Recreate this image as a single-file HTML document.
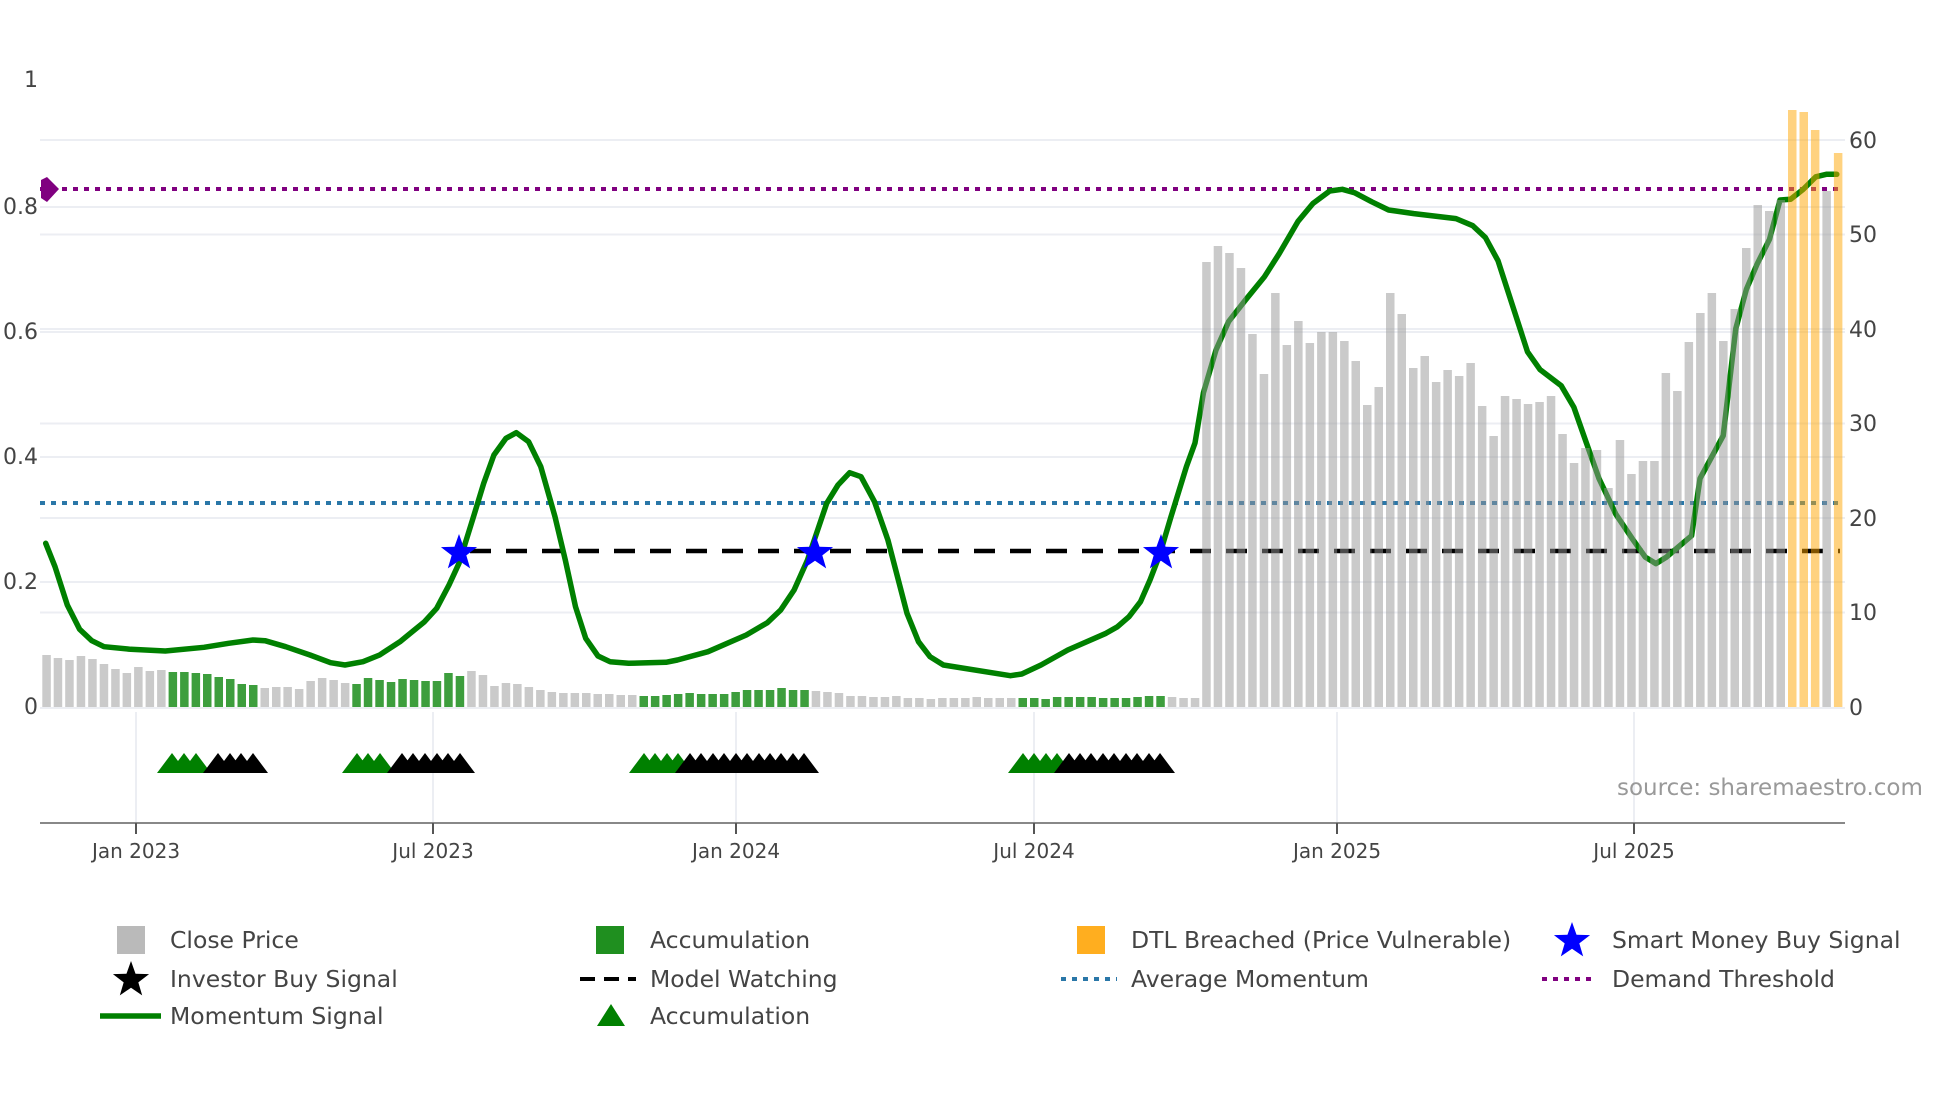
<!DOCTYPE html>
<html><head><meta charset="utf-8"><style>
html,body{margin:0;padding:0;background:#fff;}
svg{display:block;font-family:"DejaVu Sans","Liberation Sans",sans-serif;}
</style></head><body>
<svg width="1960" height="1102" viewBox="0 0 1960 1102" xmlns="http://www.w3.org/2000/svg">
<rect width="1960" height="1102" fill="#fff"/>
<g stroke="#eceef3" stroke-width="2">
<line x1="40" x2="1845" y1="582" y2="582"/><line x1="40" x2="1845" y1="457" y2="457"/>
<line x1="40" x2="1845" y1="332" y2="332"/><line x1="40" x2="1845" y1="207" y2="207"/>
<line x1="40" x2="1845" y1="612.5" y2="612.5"/><line x1="40" x2="1845" y1="518" y2="518"/>
<line x1="40" x2="1845" y1="423.5" y2="423.5"/><line x1="40" x2="1845" y1="329" y2="329"/>
<line x1="40" x2="1845" y1="234.5" y2="234.5"/><line x1="40" x2="1845" y1="140" y2="140"/>
<line x1="40" x2="1845" y1="708" y2="708"/>
<line x1="136" x2="136" y1="712" y2="823"/><line x1="433" x2="433" y1="712" y2="823"/>
<line x1="736" x2="736" y1="712" y2="823"/><line x1="1034" x2="1034" y1="712" y2="823"/>
<line x1="1337" x2="1337" y1="712" y2="823"/><line x1="1634" x2="1634" y1="712" y2="823"/>
</g>
<line x1="40" x2="1845" y1="823" y2="823" stroke="#888" stroke-width="2"/>
<g stroke="#555" stroke-width="2">
<line x1="136" x2="136" y1="823" y2="834"/><line x1="433" x2="433" y1="823" y2="834"/>
<line x1="736" x2="736" y1="823" y2="834"/><line x1="1034" x2="1034" y1="823" y2="834"/>
<line x1="1337" x2="1337" y1="823" y2="834"/><line x1="1634" x2="1634" y1="823" y2="834"/>
</g>
<g fill="#444" font-size="20" text-anchor="middle">
<text x="136" y="858">Jan 2023</text><text x="433" y="858">Jul 2023</text>
<text x="736" y="858">Jan 2024</text><text x="1034" y="858">Jul 2024</text>
<text x="1337" y="858">Jan 2025</text><text x="1634" y="858">Jul 2025</text>
</g>
<g fill="#444" font-size="22" text-anchor="end">
<text x="38" y="87">1</text><text x="38" y="214">0.8</text><text x="38" y="339">0.6</text>
<text x="38" y="464">0.4</text><text x="38" y="589">0.2</text><text x="38" y="714">0</text>
</g>
<g fill="#444" font-size="22" text-anchor="start">
<text x="1849" y="715">0</text><text x="1849" y="620">10</text><text x="1849" y="526">20</text>
<text x="1849" y="431">30</text><text x="1849" y="337">40</text><text x="1849" y="242">50</text>
<text x="1849" y="148">60</text>
</g>
<line x1="40" x2="1840" y1="189" y2="189" stroke="#800080" stroke-width="4" stroke-dasharray="5,6"/>
<line x1="40" x2="1840" y1="503" y2="503" stroke="#2a77a8" stroke-width="4" stroke-dasharray="5,6"/>
<line x1="470" x2="1840" y1="551" y2="551" stroke="#000" stroke-width="4.5" stroke-dasharray="21,15"/>
<polygon points="41,180 47,177 59,189 47,202 41,198" fill="#800080"/>
<polyline fill="none" stroke="#008000" stroke-width="5.5" stroke-linejoin="round" stroke-linecap="round" points="45.7,543.3 55,566.7 67.3,605 79.6,629.3 91.8,640.7 104,646.7 130.6,649.3 165.3,651 204,647.3 228.6,643.3 253,640 265,640.7 285.7,646.7 310,655 330.6,662.7 345,665 363,661.7 379.6,655 400,641.7 424.5,621.7 436.7,608.3 449,585 459,563.3 473.5,516.7 483.7,483.3 493.9,455 506,438.3 516.3,432.7 528.6,441.7 540.8,466.7 555,516.7 565.3,560 575.5,606.7 585.7,638.3 598,656 610,661.7 628.6,663.3 666,662.3 677.4,660 708,651.7 746.3,635 767.3,622.7 780.7,610 794.1,590 807.5,560 826.7,503.3 838,485 849.6,472.7 861,476.7 874.5,501.7 887.9,540 907,613.3 918.5,641.7 930,656.7 943.4,665 1010.4,675.7 1021.8,674 1041,665 1067.8,650 1106,633.3 1117.5,626.7 1129,616.7 1140.5,601.7 1150,580 1159.6,555 1171,516.7 1186.4,466.7 1195,442.9 1203.4,392.9 1216,350 1228.7,321.4 1245.5,300 1264.4,276.8 1279.2,253.6 1298,221.4 1312.8,203.6 1329.7,191 1342.3,189.3 1355,192.9 1371.8,201.8 1388.6,210 1413.9,213.6 1456,218.6 1472.8,225.7 1485.4,237.5 1498,260.7 1527.5,351.8 1540,369.6 1561.2,385.7 1573.8,407.1 1586.4,442.9 1599,478.6 1615.9,514.3 1632.7,539.3 1645.3,557.1 1655.9,563.6 1666.4,557.1 1679,546.4 1691.6,535.7 1700,478.6 1723.2,435.7 1729.5,382.1 1735.8,328.6 1746.4,289.3 1757,264.3 1769.5,239.3 1780,200 1790.5,199.3 1803.2,189.3 1815.8,176.8 1826.3,174.3 1836.8,174.3"/>
<path fill="rgba(150,150,150,0.5)" d="M42.3,655h8.5V707h-8.5zM53.7,658h8.5V707h-8.5zM65.2,660h8.5V707h-8.5zM76.7,656h8.5V707h-8.5zM88.2,659h8.5V707h-8.5zM99.7,664h8.5V707h-8.5zM111.2,669h8.5V707h-8.5zM122.6,673h8.5V707h-8.5zM134.1,667h8.5V707h-8.5zM145.6,671h8.5V707h-8.5zM157.1,670h8.5V707h-8.5z
M260.5,688h8.5V707h-8.5zM272,687h8.5V707h-8.5zM283.4,687h8.5V707h-8.5zM294.9,689h8.5V707h-8.5zM306.4,681h8.5V707h-8.5zM317.9,678h8.5V707h-8.5zM329.4,680h8.5V707h-8.5zM340.9,683h8.5V707h-8.5z
M467.2,671h8.5V707h-8.5zM478.7,675h8.5V707h-8.5zM490.2,686h8.5V707h-8.5zM501.7,683h8.5V707h-8.5zM513.1,684h8.5V707h-8.5zM524.6,687h8.5V707h-8.5zM536.1,690h8.5V707h-8.5zM547.6,692h8.5V707h-8.5zM559.1,693h8.5V707h-8.5zM570.6,693h8.5V707h-8.5zM582,693h8.5V707h-8.5zM593.5,694h8.5V707h-8.5zM605,694h8.5V707h-8.5zM616.5,695h8.5V707h-8.5zM628,695h8.5V707h-8.5z
M811.7,691h8.5V707h-8.5zM823.2,692h8.5V707h-8.5zM834.7,693h8.5V707h-8.5zM846.2,696h8.5V707h-8.5zM857.7,696h8.5V707h-8.5zM869.2,697h8.5V707h-8.5zM880.7,697h8.5V707h-8.5zM892.1,696h8.5V707h-8.5zM903.6,698h8.5V707h-8.5zM915.1,698h8.5V707h-8.5zM926.6,699h8.5V707h-8.5zM938.1,698h8.5V707h-8.5zM949.6,698h8.5V707h-8.5zM961.1,698h8.5V707h-8.5zM972.5,697h8.5V707h-8.5zM984,698h8.5V707h-8.5zM995.5,698h8.5V707h-8.5zM1007,698h8.5V707h-8.5z
M1167.8,697h8.5V707h-8.5zM1179.3,698h8.5V707h-8.5zM1190.8,698h8.5V707h-8.5z
M1202.2,262h8.5V707h-8.5zM1213.7,246h8.5V707h-8.5zM1225.2,253h8.5V707h-8.5zM1236.7,268h8.5V707h-8.5zM1248.2,334h8.5V707h-8.5zM1259.7,374h8.5V707h-8.5zM1271.1,293h8.5V707h-8.5zM1282.6,345h8.5V707h-8.5zM1294.1,321h8.5V707h-8.5zM1305.6,343h8.5V707h-8.5z
M1317.1,332h8.5V707h-8.5zM1328.6,332h8.5V707h-8.5zM1340.1,341h8.5V707h-8.5zM1351.5,361h8.5V707h-8.5zM1363,405h8.5V707h-8.5zM1374.5,387h8.5V707h-8.5zM1386,293h8.5V707h-8.5zM1397.5,314h8.5V707h-8.5zM1409,368h8.5V707h-8.5zM1420.5,356h8.5V707h-8.5z
M1431.9,382h8.5V707h-8.5zM1443.4,370h8.5V707h-8.5zM1454.9,376h8.5V707h-8.5zM1466.4,363h8.5V707h-8.5zM1477.9,406h8.5V707h-8.5zM1489.4,436h8.5V707h-8.5zM1500.8,396h8.5V707h-8.5zM1512.3,399h8.5V707h-8.5zM1523.8,404h8.5V707h-8.5zM1535.3,402h8.5V707h-8.5z
M1546.8,396h8.5V707h-8.5zM1558.3,434h8.5V707h-8.5zM1569.8,463h8.5V707h-8.5zM1581.2,448h8.5V707h-8.5zM1592.7,450h8.5V707h-8.5zM1604.2,488h8.5V707h-8.5zM1615.7,440h8.5V707h-8.5zM1627.2,474h8.5V707h-8.5zM1638.7,461h8.5V707h-8.5zM1650.2,461h8.5V707h-8.5z
M1661.6,373h8.5V707h-8.5zM1673.1,391h8.5V707h-8.5zM1684.6,342h8.5V707h-8.5zM1696.1,313h8.5V707h-8.5zM1707.6,293h8.5V707h-8.5zM1719.1,341h8.5V707h-8.5zM1730.5,309h8.5V707h-8.5zM1742,248h8.5V707h-8.5zM1753.5,205h8.5V707h-8.5zM1765,211h8.5V707h-8.5zM1776.5,200h8.5V707h-8.5z
M1822.4,191h8.5V707h-8.5z"/>
<path fill="rgba(0,128,0,0.76)" d="M168.6,672h8.5V707h-8.5zM180.1,672h8.5V707h-8.5zM191.6,673h8.5V707h-8.5zM203,674h8.5V707h-8.5zM214.5,677h8.5V707h-8.5zM226,679h8.5V707h-8.5zM237.5,684h8.5V707h-8.5zM249,685h8.5V707h-8.5z
M352.3,684h8.5V707h-8.5zM363.8,678h8.5V707h-8.5zM375.3,680h8.5V707h-8.5zM386.8,682h8.5V707h-8.5zM398.3,679h8.5V707h-8.5zM409.8,680h8.5V707h-8.5zM421.3,681h8.5V707h-8.5zM432.7,681h8.5V707h-8.5zM444.2,673h8.5V707h-8.5zM455.7,676h8.5V707h-8.5z
M639.5,696h8.5V707h-8.5zM650.9,696h8.5V707h-8.5zM662.4,695h8.5V707h-8.5zM673.9,694h8.5V707h-8.5zM685.4,693h8.5V707h-8.5zM696.9,694h8.5V707h-8.5zM708.4,694h8.5V707h-8.5zM719.9,694h8.5V707h-8.5zM731.4,692h8.5V707h-8.5zM742.8,690h8.5V707h-8.5zM754.3,690h8.5V707h-8.5zM765.8,690h8.5V707h-8.5zM777.3,688h8.5V707h-8.5zM788.8,690h8.5V707h-8.5zM800.3,690h8.5V707h-8.5z
M1018.5,698h8.5V707h-8.5zM1030,698h8.5V707h-8.5zM1041.4,699h8.5V707h-8.5zM1052.9,697h8.5V707h-8.5zM1064.4,697h8.5V707h-8.5zM1075.9,697h8.5V707h-8.5zM1087.4,697h8.5V707h-8.5zM1098.9,698h8.5V707h-8.5zM1110.4,698h8.5V707h-8.5zM1121.8,698h8.5V707h-8.5zM1133.3,697h8.5V707h-8.5zM1144.8,696h8.5V707h-8.5zM1156.3,696h8.5V707h-8.5z"/>
<path fill="rgba(255,165,0,0.5)" d="M1788,110h8.5V707h-8.5zM1799.5,112h8.5V707h-8.5zM1810.9,130h8.5V707h-8.5zM1833.9,153h8.5V707h-8.5z"/>
<defs><polygon id="st" points="0,-19 4.53,-6.23 18.07,-5.87 7.32,2.38 11.17,15.37 0,7.7 -11.17,15.37 -7.32,2.38 -18.07,-5.87 -4.53,-6.23"/></defs>
<use href="#st" transform="translate(459,553)" fill="#0000ff"/>
<use href="#st" transform="translate(815,553)" fill="#0000ff"/>
<use href="#st" transform="translate(1161,553)" fill="#0000ff"/>
<g fill="#008000">
<polygon points="157,773 172,753 187,773"/><polygon points="169,773 184,753 199,773"/><polygon points="181,773 196,753 211,773"/>
<polygon points="342,773 357,753 372,773"/><polygon points="353,773 368,753 383,773"/><polygon points="365,773 380,753 395,773"/>
<polygon points="629,773 644,753 659,773"/><polygon points="640,773 655,753 670,773"/><polygon points="652,773 667,753 682,773"/><polygon points="663,773 678,753 693,773"/>
<polygon points="1008,773 1023,753 1038,773"/><polygon points="1019,773 1034,753 1049,773"/><polygon points="1031,773 1046,753 1061,773"/><polygon points="1042,773 1057,753 1072,773"/>
</g>
<g fill="#000">
<polygon points="203,773 218,753 233,773"/><polygon points="215,773 230,753 245,773"/><polygon points="226,773 241,753 256,773"/><polygon points="238,773 253,753 268,773"/>
<polygon points="387,773 402,753 417,773"/><polygon points="398,773 413,753 428,773"/><polygon points="410,773 425,753 440,773"/><polygon points="422,773 437,753 452,773"/><polygon points="433,773 448,753 463,773"/><polygon points="445,773 460,753 475,773"/>
<polygon points="675,773 690,753 705,773"/><polygon points="686,773 701,753 716,773"/><polygon points="698,773 713,753 728,773"/><polygon points="709,773 724,753 739,773"/><polygon points="721,773 736,753 751,773"/><polygon points="732,773 747,753 762,773"/><polygon points="744,773 759,753 774,773"/><polygon points="755,773 770,753 785,773"/><polygon points="766,773 781,753 796,773"/><polygon points="778,773 793,753 808,773"/><polygon points="789,773 804,753 819,773"/>
<polygon points="1054,773 1069,753 1084,773"/><polygon points="1065,773 1080,753 1095,773"/><polygon points="1076,773 1091,753 1106,773"/><polygon points="1088,773 1103,753 1118,773"/><polygon points="1099,773 1114,753 1129,773"/><polygon points="1111,773 1126,753 1141,773"/><polygon points="1122,773 1137,753 1152,773"/><polygon points="1134,773 1149,753 1164,773"/><polygon points="1145,773 1160,753 1175,773"/>
</g>
<text x="1617" y="795" font-size="23" fill="#999">source: sharemaestro.com</text>
<rect x="117" y="926" width="28" height="28" fill="#bababa"/>
<rect x="596" y="926" width="28" height="28" fill="#1f8f1f"/>
<rect x="1077" y="926" width="28" height="28" fill="#ffae1f"/>
<use href="#st" transform="translate(1572,941)" fill="#0000ff"/>
<use href="#st" transform="translate(131,980)" fill="#000"/>
<line x1="580" x2="636" y1="979" y2="979" stroke="#000" stroke-width="4" stroke-dasharray="15,9"/>
<line x1="1061" x2="1117" y1="979" y2="979" stroke="#2a77a8" stroke-width="4" stroke-dasharray="5,6"/>
<line x1="1542" x2="1597" y1="979" y2="979" stroke="#800080" stroke-width="4" stroke-dasharray="5,6"/>
<line x1="100" x2="161" y1="1016" y2="1016" stroke="#008000" stroke-width="5.5"/>
<polygon points="597,1026 611,1004 625,1026" fill="#008000"/>
<g fill="#444" font-size="23.5">
<text x="170" y="948">Close Price</text><text x="650" y="948">Accumulation</text>
<text x="1131" y="948">DTL Breached (Price Vulnerable)</text><text x="1612" y="948">Smart Money Buy Signal</text>
<text x="170" y="987">Investor Buy Signal</text><text x="650" y="987">Model Watching</text>
<text x="1131" y="987">Average Momentum</text><text x="1612" y="987">Demand Threshold</text>
<text x="170" y="1024">Momentum Signal</text><text x="650" y="1024">Accumulation</text>
</g>
</svg>
</body></html>
